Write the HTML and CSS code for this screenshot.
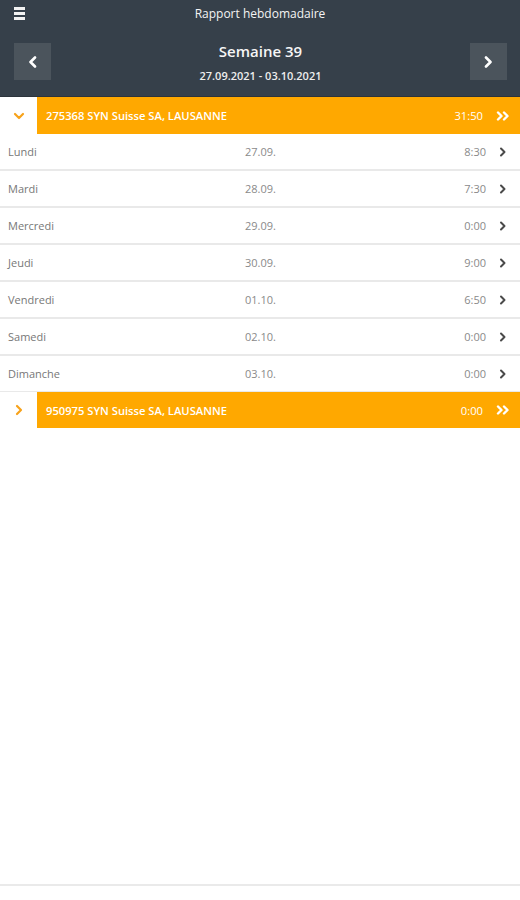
FILE: index.html
```html
<!DOCTYPE html>
<html lang="fr">
<head>
<meta charset="utf-8">
<link rel="stylesheet" href="styles.css">
</head>
<body>
<div class="page">
  <header class="header">
    <div class="topbar">
      <span class="burger"><i></i><i></i><i></i></span>
      <span class="title">Rapport hebdomadaire</span>
    </div>
    <div class="weeknav">
      <button class="navbtn"><svg width="12" height="12" viewBox="0 0 12 12"><path d="M8 1.5 L3.5 6 L8 10.5" fill="none" stroke="#fff" stroke-width="2.6" stroke-linecap="round" stroke-linejoin="round"/></svg></button>
      <div class="week">
        <div class="weeknum">Semaine 39</div>
        <div class="range">27.09.2021 - 03.10.2021</div>
      </div>
      <button class="navbtn"><svg width="12" height="12" viewBox="0 0 12 12"><path d="M4 1.5 L8.5 6 L4 10.5" fill="none" stroke="#fff" stroke-width="2.6" stroke-linecap="round" stroke-linejoin="round"/></svg></button>
    </div>
  </header>

  <main class="list">
    <div class="group first">
      <span class="toggle"><svg width="12" height="8" viewBox="0 0 12 8"><path d="M2 2 L6 6 L10 2" fill="none" stroke="#f7a21a" stroke-width="2.2" stroke-linecap="round" stroke-linejoin="round"/></svg></span>
      <div class="bar">
        <span class="bar-name">275368 SYN Suisse SA, LAUSANNE</span>
        <span class="bar-time">31:50</span>
        <svg class="dbl" width="14" height="10" viewBox="0 0 14 10"><path d="M2 1.5 L5.5 5 L2 8.5 M8 1.5 L11.5 5 L8 8.5" fill="none" stroke="#fff" stroke-width="2.4" stroke-linecap="round" stroke-linejoin="round"/></svg>
      </div>
    </div>

    <div class="day"><span class="dname">Lundi</span><span class="ddate">27.09.</span><span class="dtime">8:30</span><svg class="chev" width="8" height="10" viewBox="0 0 8 10"><path d="M2 1.5 L5.5 5 L2 8.5" fill="none" stroke="#4a4a4a" stroke-width="2" stroke-linecap="round" stroke-linejoin="round"/></svg></div>
    <div class="day"><span class="dname">Mardi</span><span class="ddate">28.09.</span><span class="dtime">7:30</span><svg class="chev" width="8" height="10" viewBox="0 0 8 10"><path d="M2 1.5 L5.5 5 L2 8.5" fill="none" stroke="#4a4a4a" stroke-width="2" stroke-linecap="round" stroke-linejoin="round"/></svg></div>
    <div class="day"><span class="dname">Mercredi</span><span class="ddate">29.09.</span><span class="dtime">0:00</span><svg class="chev" width="8" height="10" viewBox="0 0 8 10"><path d="M2 1.5 L5.5 5 L2 8.5" fill="none" stroke="#4a4a4a" stroke-width="2" stroke-linecap="round" stroke-linejoin="round"/></svg></div>
    <div class="day"><span class="dname">Jeudi</span><span class="ddate">30.09.</span><span class="dtime">9:00</span><svg class="chev" width="8" height="10" viewBox="0 0 8 10"><path d="M2 1.5 L5.5 5 L2 8.5" fill="none" stroke="#4a4a4a" stroke-width="2" stroke-linecap="round" stroke-linejoin="round"/></svg></div>
    <div class="day"><span class="dname">Vendredi</span><span class="ddate">01.10.</span><span class="dtime">6:50</span><svg class="chev" width="8" height="10" viewBox="0 0 8 10"><path d="M2 1.5 L5.5 5 L2 8.5" fill="none" stroke="#4a4a4a" stroke-width="2" stroke-linecap="round" stroke-linejoin="round"/></svg></div>
    <div class="day"><span class="dname">Samedi</span><span class="ddate">02.10.</span><span class="dtime">0:00</span><svg class="chev" width="8" height="10" viewBox="0 0 8 10"><path d="M2 1.5 L5.5 5 L2 8.5" fill="none" stroke="#4a4a4a" stroke-width="2" stroke-linecap="round" stroke-linejoin="round"/></svg></div>
    <div class="day last"><span class="dname">Dimanche</span><span class="ddate">03.10.</span><span class="dtime">0:00</span><svg class="chev" width="8" height="10" viewBox="0 0 8 10"><path d="M2 1.5 L5.5 5 L2 8.5" fill="none" stroke="#4a4a4a" stroke-width="2" stroke-linecap="round" stroke-linejoin="round"/></svg></div>

    <div class="group">
      <span class="toggle"><svg width="8" height="12" viewBox="0 0 8 12"><path d="M2 2 L6 6 L2 10" fill="none" stroke="#f7a21a" stroke-width="2.2" stroke-linecap="round" stroke-linejoin="round"/></svg></span>
      <div class="bar">
        <span class="bar-name">950975 SYN Suisse SA, LAUSANNE</span>
        <span class="bar-time">0:00</span>
        <svg class="dbl" width="14" height="10" viewBox="0 0 14 10"><path d="M2 1.5 L5.5 5 L2 8.5 M8 1.5 L11.5 5 L8 8.5" fill="none" stroke="#fff" stroke-width="2.4" stroke-linecap="round" stroke-linejoin="round"/></svg>
      </div>
    </div>
  </main>

  <footer class="footer"></footer>
</div>
</body>
</html>
```

FILE: styles.css
```css
* { box-sizing: border-box; }
html, body { margin: 0; padding: 0; background: #fff; }
body {
  font-family: "Open Sans", "DejaVu Sans", sans-serif;
  font-size: 11px;
  color: #777;
}
.page {
  display: flex;
  flex-direction: column;
  min-height: 900px;
}
.header {
  background: #36404a;
  height: 97px;
  border-bottom: 1px solid #2c343c;
  color: #fff;
}
.topbar {
  position: relative;
  height: 26px;
  display: flex;
  align-items: center;
  justify-content: center;
}
.title {
  font-size: 12px;
  color: #f4f4f4;
}
.burger {
  position: absolute;
  left: 14px;
  top: 7px;
  width: 11px;
  display: flex;
  flex-direction: column;
  gap: 2px;
}
.burger i {
  display: block;
  height: 3px;
  background: #f2f2f2;
}
.weeknav {
  display: flex;
  align-items: center;
  justify-content: space-between;
  height: 54px;
  padding: 17px 13px 0 14px;
}
.navbtn {
  width: 37px;
  height: 37px;
  background: #4b545c;
  border: none;
  padding: 0;
  display: flex;
  align-items: center;
  justify-content: center;
}
.week {
  text-align: center;
}
.weeknum {
  font-size: 15px;
  font-weight: 600;
  color: #f6f6f6;
  line-height: 20px;
}
.range {
  font-size: 11px;
  font-weight: 600;
  color: #eee;
  margin-top: 7px;
}
.list {
  flex: 1;
  display: flex;
  flex-direction: column;
}
.group {
  display: flex;
  height: 36px;
}
.group.first { height: 37px; }
.toggle {
  width: 37px;
  display: flex;
  align-items: center;
  justify-content: center;
}
.bar {
  flex: 1;
  background: #ffa800;
  display: flex;
  align-items: center;
  padding: 0 10px 0 9px;
  color: #fff;
  font-weight: 600;
  font-size: 11.2px;
}
.bar-name { flex: 1; }
.bar-time { margin-right: 13px; font-weight: 400; }
.day {
  display: flex;
  align-items: center;
  height: 37px;
  border-bottom: 2px solid #e9e9e9;
  padding: 0 13px 0 8px;
}
.day.last { border-bottom: 1px solid #e9e9e9; height: 36px; }
.dname { width: 237px; }
.ddate { flex: 1; color: #8a8a8a; }
.dtime { margin-right: 13px; color: #8a8a8a; }
.chev { display: block; }
.footer {
  height: 16px;
  border-top: 2px solid #eaeaea;
}
```
